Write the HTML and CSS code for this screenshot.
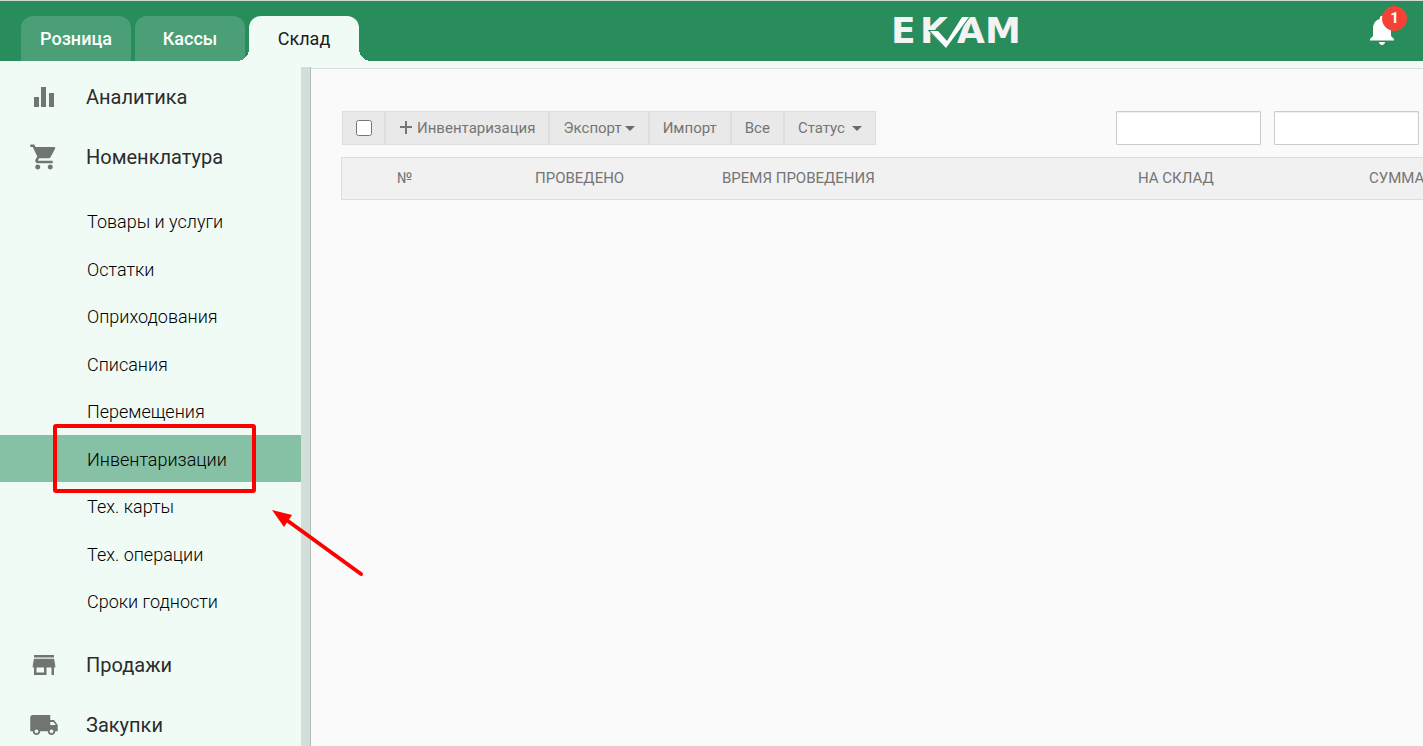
FILE: index.html
```html
<!DOCTYPE html>
<html lang="ru">
<head>
<meta charset="utf-8">
<title>Инвентаризации</title>
<link rel="stylesheet" href="styles.css">
</head>
<body>
<header class="topbar">
  <nav class="tabs">
    <a class="tab" href="#">Розница</a>
    <a class="tab" href="#">Кассы</a>
    <a class="tab tab-active" href="#">Склад</a>
  </nav>
  <a class="logo" href="#" aria-label="EKAM">
    <svg width="132" height="60" viewBox="0 -15 132 60">
      <g class="logo-text">
        <text x="1" y="27">E</text>
        <text x="30" y="27">K</text>
        <text x="67" y="27">A</text>
        <text x="95" y="27">M</text>
      </g>
      <path class="logo-check" d="M40 15h8l9 10L72 1h7L56 32z"/>
    </svg>
  </a>
  <button class="bell" aria-label="Уведомления">
    <svg width="36" height="36" viewBox="0 0 24 24"><path fill="#fff" d="M12 22c1.100 0 2-.9 2-2h-4c0 1.100.89 2 2 2zm6-6v-5c0-3.070-1.640-5.640-4.500-6.320V4c0-.83-.67-1.500-1.500-1.500s-1.500.67-1.500 1.500v.68C7.630 5.360 6 7.920 6 11v5l-2 2v1h16v-1l-2-2z"/></svg>
    <span class="badge">1</span>
  </button>
</header>
<div class="workspace">
  <aside class="sidebar">
    <a class="section" href="#">
      <svg class="icon" viewBox="0 0 30 30"><path d="M5 15h5v10H5zM12 5h5v20h-5zM20 11h5v14h-5z"/></svg>
      Аналитика
    </a>
    <a class="section" href="#">
      <svg class="icon" viewBox="0 0 24 24"><path d="M7 18c-1.100 0-1.990.9-1.990 2S5.900 22 7 22s2-.9 2-2-.9-2-2-2zM1 2v2h2l3.600 7.590-1.350 2.450c-.16.28-.25.61-.25.960 0 1.100.9 2 2 2h12v-2H7.420c-.14 0-.25-.11-.25-.25l.03-.12.900-1.630h7.450c.75 0 1.410-.41 1.750-1.030l3.580-6.490c.08-.14.12-.31.12-.48 0-.55-.45-1-1-1H5.210l-.94-2H1zm16 16c-1.100 0-1.990.9-1.990 2s.89 2 1.990 2 2-.9 2-2-.9-2-2-2z"/></svg>
      Номенклатура
    </a>
    <ul class="submenu">
      <li><a href="#">Товары и услуги</a></li>
      <li><a href="#">Остатки</a></li>
      <li><a href="#">Оприходования</a></li>
      <li><a href="#">Списания</a></li>
      <li><a href="#">Перемещения</a></li>
      <li class="current"><a href="#">Инвентаризации</a>
        <span class="highlight"></span>
        <svg class="arrow" width="94" height="70" viewBox="0 0 94 70"><path d="M89 66L16 13" stroke="#f00" stroke-width="4" stroke-linecap="round"/><path d="M0 2l20 5-8 12z" fill="#f00"/></svg>
      </li>
      <li><a href="#">Тех. карты</a></li>
      <li><a href="#">Тех. операции</a></li>
      <li><a href="#">Сроки годности</a></li>
    </ul>
    <a class="section" href="#">
      <svg class="icon" viewBox="0 0 24 24"><path d="M20 4H4v2h16V4zm1 10v-2l-1-5H4l-1 5v2h1v6h10v-6h4v6h2v-6h1zm-9 4H6v-4h6v4z"/></svg>
      Продажи
    </a>
    <a class="section" href="#">
      <svg class="icon" viewBox="0 0 24 24"><path d="M20 8h-3V4H3c-1.100 0-2 .9-2 2v11h2c0 1.660 1.340 3 3 3s3-1.340 3-3h6c0 1.660 1.340 3 3 3s3-1.340 3-3h2v-5l-3-4zM6 18.500c-.83 0-1.500-.67-1.500-1.500s.67-1.500 1.500-1.500 1.500.67 1.500 1.500-.67 1.500-1.500 1.500zm13.500-9l1.960 2.500H17V9.500h2.500zm-1.500 9c-.83 0-1.500-.67-1.500-1.500s.67-1.500 1.500-1.500 1.500.67 1.500 1.500-.67 1.500-1.500 1.500z"/></svg>
      Закупки
    </a>
  </aside>
  <main class="content">
    <div class="toolbar">
      <div class="group">
        <label class="btn check"><input type="checkbox" aria-label="Выбрать все"></label>
        <button class="btn"><svg class="plus" width="14" height="14" viewBox="0 0 14 14"><path d="M7 0v13M1 6h12" stroke="currentColor" stroke-width="2"/></svg>Инвентаризация</button>
        <button class="btn">Экспорт<span class="caret"></span></button>
        <button class="btn">Импорт</button>
        <button class="btn">Все</button>
        <button class="btn">Статус<span class="caret caret-far"></span></button>
      </div>
      <div class="filters">
        <input class="field" type="text" aria-label="Дата с">
        <input class="field" type="text" aria-label="Дата по">
      </div>
    </div>
    <table class="grid">
      <colgroup><col class="c-pick"><col class="c-num"><col class="c-done"><col class="c-time"><col class="c-store"><col></colgroup>
      <thead><tr><th></th><th>№</th><th>Проведено</th><th>Время проведения</th><th>На склад</th><th>Сумма</th></tr></thead>
    </table>
  </main>
</div>
</body>
</html>
```
FILE: styles.css
```css
* { box-sizing: border-box; }
body {
  margin: 0;
  height: 100vh;
  display: flex;
  flex-direction: column;
  overflow: hidden;
  background: #f1fbf6;
  font-family: Roboto, "Noto Sans", sans-serif;
}
a { color: inherit; text-decoration: none; }
button { font: inherit; cursor: pointer; }

.topbar {
  flex: none;
  display: grid;
  grid-template-columns: 9fr auto 4fr;
  align-items: end;
  height: 61px;
  padding: 0 15px 0 21px;
  border-top: 1px solid #cfdcd6;
  background: #288c5c;
}
.tabs { display: flex; gap: 4px; }
.tab {
  width: 110px;
  height: 45px;
  border-radius: 12px 12px 0 0;
  background: #4a9f77;
  color: #fff;
  font-size: 18px;
  font-weight: 500;
  line-height: 45px;
  text-align: center;
}
.tab-active {
  position: relative;
  background: #f1fbf6;
  color: #1c1c1c;
  font-weight: 400;
}
.tab-active::before,
.tab-active::after {
  content: "";
  position: absolute;
  bottom: 0;
  width: 12px;
  height: 12px;
}
.tab-active::before { right: 100%; background: radial-gradient(circle at 0 0, transparent 12px, #f1fbf6 12px); }
.tab-active::after { left: 100%; background: radial-gradient(circle at 100% 0, transparent 12px, #f1fbf6 12px); }
.logo svg { display: block; }
.logo-text { fill: #f2f3f2; font-family: "DejaVu Sans", sans-serif; font-size: 36px; font-weight: 700; }
.logo-check { fill: #fff; stroke: #288c5c; stroke-width: 2; paint-order: stroke; }
.bell {
  position: relative;
  justify-self: end;
  width: 44px;
  height: 49px;
  padding: 0;
  border: 0;
  background: none;
  text-align: left;
}
.bell svg { display: block; height: 36px; margin-bottom: 13px; }
.badge {
  position: absolute;
  top: -6px;
  right: 1px;
  width: 25px;
  height: 25px;
  border-radius: 50%;
  background: #f44336;
  color: #fff;
  font-size: 15px;
  font-weight: 700;
  line-height: 25px;
  text-align: center;
}

.workspace { flex: 1; display: flex; min-height: 0; padding-top: 6px; }
.sidebar {
  position: relative;
  z-index: 1;
  flex: none;
  width: 311px;
  border-right: 1px solid #b5bfba;
  box-shadow: inset -9px 0 #d3ddd9;
}
.section {
  display: flex;
  align-items: center;
  gap: 27px;
  height: 60px;
  padding-left: 29px;
  color: #2a2d2b;
  font-size: 20px;
}
.icon { width: 30px; height: 30px; fill: #707571; }
.submenu { margin: 0; padding: 10px 9px 10px 0; list-style: none; }
.submenu li { height: 48px; color: #000; font-size: 18px; font-weight: 300; line-height: 50px; }
.submenu li:nth-child(even) { height: 47px; }
.submenu a { display: block; height: 100%; padding-left: 87px; }
.submenu .current { position: relative; background: #86c0a5; }
.highlight {
  position: absolute;
  top: -11px;
  left: 53px;
  width: 203px;
  height: 69px;
  border: 4px solid #f00;
  border-radius: 3px;
}
.arrow { position: absolute; top: 73px; left: 272px; }

.content {
  flex: 1;
  min-width: 0;
  margin-top: 1px;
  padding: 42px 0 0 30px;
  border-top: 1px solid #d5dfdb;
  background: #fafafa;
  color: #757575;
  font-size: 15px;
}
.toolbar { display: flex; justify-content: space-between; padding: 0 4px 12px 1px; }
.group { display: flex; }
.btn {
  display: flex;
  align-items: center;
  height: 34px;
  padding: 0 13px;
  border: 1px solid #ddd;
  background: #e9e9e9;
  color: #757575;
}
.check { padding-right: 12px; }
.check input { width: 16px; height: 16px; margin: 0; }
.plus { margin-right: 4px; }
.caret {
  margin-left: 3px;
  border: 5px solid transparent;
  border-top-color: #6a6a6a;
  border-bottom: 0;
}
.caret-far { margin-left: 7px; }
.filters { display: flex; gap: 13px; }
.field {
  width: 145px;
  height: 34px;
  border: 1px solid #ccc;
  border-radius: 1px;
  background: #fff;
  box-shadow: inset 0 1px 1px #eee;
}
.grid {
  width: 100%;
  table-layout: fixed;
  border-spacing: 0;
  border: 1px solid #ddd;
  border-right: 0;
  background: #f1f1f1;
}
.grid th {
  height: 41px;
  padding: 0 0 2px;
  overflow: hidden;
  font-weight: 400;
  text-align: left;
  text-transform: uppercase;
  white-space: nowrap;
}
.c-pick { width: 55px; }
.c-num { width: 138px; }
.c-done { width: 187px; }
.c-time { width: 416px; }
.c-store { width: 231px; }
```
